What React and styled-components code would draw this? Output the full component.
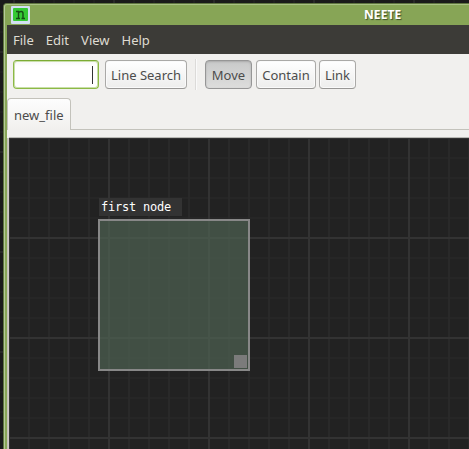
import React from "react";
import styled, { createGlobalStyle, css } from "styled-components";

const Global = createGlobalStyle`
  * { box-sizing: border-box; }
  html, body { margin: 0; height: 100%; overflow: hidden; background: #1b1b1b; }
  body, button, input { font-family: "Noto Sans", sans-serif; font-size: 13px; }
`;

const Desktop = styled.div`
  width: 469px;
  height: 449px;
  overflow: hidden;
  padding: 3px 0 0 3px;
  background-color: #1a1a1a;
  background-image:
    linear-gradient(90deg, #282828 2px, transparent 2px),
    linear-gradient(#282828 2px, transparent 2px),
    linear-gradient(90deg, #1f1f1f 2px, transparent 2px),
    linear-gradient(#1f1f1f 2px, transparent 2px);
  background-size: 100px 100px, 100px 100px, 20px 20px, 20px 20px;
  background-position: 13px 51px, 13px 51px, 13px 11px, 13px 11px;
`;

const Window = styled.div`
  display: flex;
  flex-direction: column;
  width: 466px;
  height: 446px;
  border-top: 1px solid #5f7540;
  border-left: 1px solid #5f7540;
  border-top-left-radius: 4px;
  background: #87a556;
`;

const Frame = styled.div`
  flex: 1;
  display: flex;
  flex-direction: column;
  padding-left: 2px;
  border-top: 1px solid #a9c184;
  border-left: 1px solid #b4c99a;
  border-top-left-radius: 3px;
`;

const TitleBar = styled.header`
  height: 20px;
  display: grid;
  grid-template-columns: 357px auto;
  align-items: center;
  flex: none;
`;

const AppIcon = styled.svg`
  display: block;
  margin: 0 0 0 4px;
`;

const Title = styled.h1`
  margin: 0;
  color: #fff;
  font-size: 12px;
  line-height: 18px;
  font-weight: 700;
  letter-spacing: 0.1px;
  text-shadow: 1px 1px 1px #40512a;
`;

const MenuBar = styled.nav`
  height: 29px;
  flex: none;
  display: flex;
  align-items: center;
  gap: 12px;
  padding: 0 0 0 6px;
  background: #3c3b37;
  color: #dfdbd2;
`;

const MenuItem = styled.span`
  line-height: 18px;
`;

const ToolBar = styled.div`
  height: 44px;
  flex: none;
  display: flex;
  align-items: center;
  padding: 0 0 3px 6px;
  background: #f1f0ee;
`;

const SearchField = styled.div`
  width: 86px;
  height: 29px;
  display: flex;
  justify-content: flex-end;
  align-items: center;
  padding-right: 5px;
  border: 1px solid #8cb945;
  border-top-color: #7cab34;
  border-radius: 4px;
  background: linear-gradient(#f7f7f7, #fff 5px);
  box-shadow: inset 0 0 0 1px #c9dfaa;
`;

const Caret = styled.i`
  width: 1px;
  height: 18px;
  background: #333;
`;

const Button = styled.button`
  width: ${(p) => p.$width}px;
  height: 29px;
  margin-left: ${(p) => p.$gap || 4}px;
  padding: 0;
  border: 1px solid #aaa9a7;
  border-bottom-color: #989795;
  border-radius: 4px;
  background: linear-gradient(#fff, #ededec);
  box-shadow: inset 0 0 0 1px #fafafa;
  color: #4c4c4c;
  line-height: 18px;
  white-space: nowrap;
  ${(p) =>
    p.$pressed &&
    css`
      border-color: #969696;
      background: linear-gradient(#c8c9c9, #dddddc);
      box-shadow: inset 0 1px 2px #aaa;
    `}
`;

const Divider = styled.i`
  width: 2px;
  height: 31px;
  margin-left: 8px;
  border-left: 1px solid #dcdbd9;
  border-right: 1px solid #fafafa;
`;

const TabStrip = styled.div`
  height: 32px;
  flex: none;
  display: flex;
  background: #f1f0ee;
`;

const Tab = styled.div`
  width: 64px;
  height: 32px;
  padding: 7px 0 0 6px;
  border: 1px solid #c3c2bb;
  border-bottom: 0;
  border-radius: 4px 4px 0 0;
  background: linear-gradient(#fdfdfd, #f1f0ee);
  color: #4c4c4c;
  line-height: 18px;
  white-space: nowrap;
`;

const TabRest = styled.div`
  flex: 1;
  border-bottom: 1px solid #c3c2bb;
`;

const Notebook = styled.div`
  flex: 1;
  min-height: 0;
  display: flex;
  padding: 7px 0 0 2px;
  background: linear-gradient(90deg, #c3c0b8 1px, #d5d2cb 2px, transparent 2px) 0 8px no-repeat, #f1f0ee;
`;

const Canvas = styled.main`
  position: relative;
  flex: 1;
  overflow: hidden;
  border-top: 1px solid #b9b9b5;
  background-color: #222;
  background-image:
    linear-gradient(90deg, #333 2px, transparent 2px),
    linear-gradient(#333 2px, transparent 2px),
    linear-gradient(90deg, #292929 2px, transparent 2px),
    linear-gradient(#262626 2px, transparent 2px);
  background-size: 100px 100px, 100px 100px, 20px 20px, 20px 20px;
  background-position: 99px 99px, 99px 99px, 19px 19px, 19px 19px;
`;

const NodeLabel = styled.div`
  position: absolute;
  left: 90px;
  top: 60px;
  width: 83px;
  height: 18px;
  padding-left: 2px;
  background: #333;
  color: #fff;
  font: 12px/18px "DejaVu Sans Mono", monospace;
  letter-spacing: -0.22px;
  white-space: pre;
`;

const NodeBox = styled.div`
  position: absolute;
  left: 89px;
  top: 81px;
  width: 152px;
  height: 152px;
  display: flex;
  justify-content: flex-end;
  align-items: flex-end;
  padding: 1px;
  border: 2px solid #888;
  background: rgba(79, 99, 82, 0.7);
`;

const ResizeHandle = styled.div`
  width: 13px;
  height: 13px;
  background: #7b7b7b;
`;

export default function App() {
  return (
    <>
      <Global />
      <Desktop>
        <Window>
          <Frame>
            <TitleBar>
              <AppIcon width="19" height="18" viewBox="0 0 19 18">
                <rect width="19" height="18" rx="1" fill="#d3dff2" />
                <rect x="2" y="2" width="15" height="13" rx="1" fill="#35c935" />
                <path
                  d="M5 5.5H7.5V12M5 12.5H9M7.5 7C8.6 5.2 12 4.8 12 7.4V12M10.5 12.5H14"
                  fill="none"
                  stroke="#164c16"
                  strokeWidth="1.4"
                />
              </AppIcon>
              <Title>NEETE</Title>
            </TitleBar>
            <MenuBar>
              {["File", "Edit", "View", "Help"].map((name) => (
                <MenuItem key={name}>{name}</MenuItem>
              ))}
            </MenuBar>
            <ToolBar>
              <SearchField>
                <Caret />
              </SearchField>
              <Button $width={82} $gap={6}>Line Search</Button>
              <Divider />
              <Button $width={47} $gap={8} $pressed>Move</Button>
              <Button $width={60}>Contain</Button>
              <Button $width={37} $gap={3}>Link</Button>
            </ToolBar>
            <TabStrip>
              <Tab>new_file</Tab>
              <TabRest />
            </TabStrip>
            <Notebook>
              <Canvas>
                <NodeBox>
                  <ResizeHandle />
                </NodeBox>
                <NodeLabel>first node</NodeLabel>
              </Canvas>
            </Notebook>
          </Frame>
        </Window>
      </Desktop>
    </>
  );
}
